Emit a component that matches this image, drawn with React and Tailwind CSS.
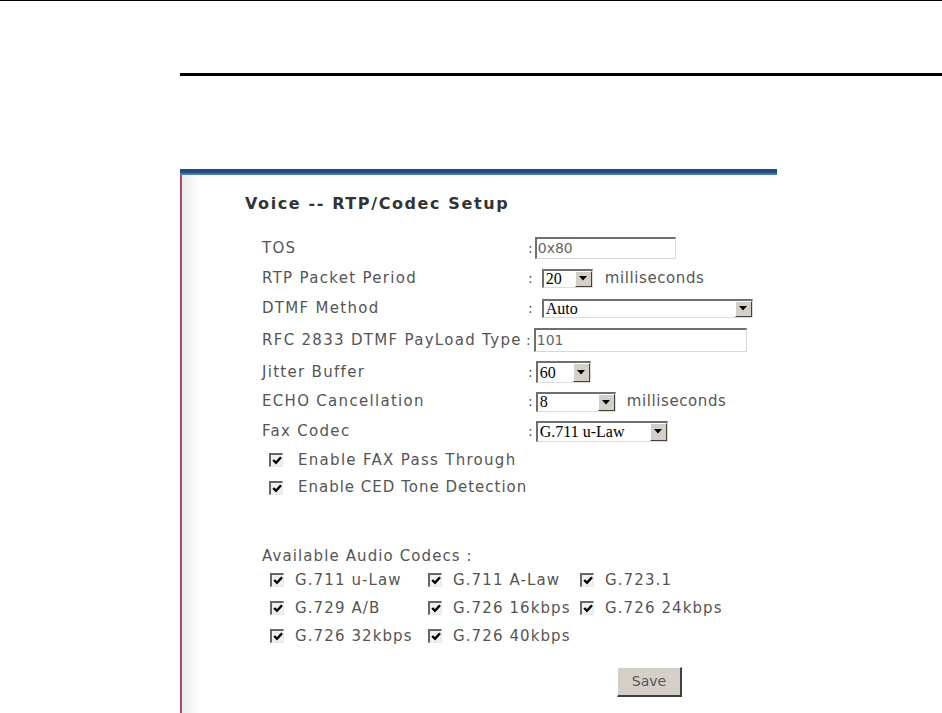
import React from "react";

const FONT = "font-['DejaVu_Sans',Verdana,sans-serif]";
const SERIF = "font-['Liberation_Serif','Times_New_Roman',serif]";

function Arrow() {
  return (
    <div className="w-[17px] shrink-0 bg-[#d4d0c8] border-t border-l border-t-white border-l-white border-b border-r border-b-[#404040] border-r-[#404040] flex items-center justify-center">
      <svg width="8" height="5" viewBox="0 0 8 5">
        <polygon points="0,0 8,0 4,4.5" fill="#000" />
      </svg>
    </div>
  );
}

function Select({ cls, text }) {
  return (
    <div
      className={`flex items-stretch bg-white border-t-2 border-l-2 border-t-[#6f6f6f] border-l-[#6f6f6f] border-b border-r border-b-[#dcdcdc] border-r-[#dcdcdc] ${cls}`}
    >
      <div className={`flex-1 ${SERIF} text-[16px] tracking-normal leading-none text-black pl-[2px] flex items-center overflow-hidden whitespace-nowrap`}>
        {text}
      </div>
      <Arrow />
    </div>
  );
}

function Input({ cls, text }) {
  return (
    <div
      className={`bg-white border-t-2 border-l-2 border-t-[#6f6f6f] border-l-[#6f6f6f] border-b border-r border-b-[#d8d8d8] border-r-[#d8d8d8] flex items-center pl-[1px] ${FONT} text-[14px] tracking-normal text-[#666] ${cls}`}
    >
      {text}
    </div>
  );
}

function Check() {
  return (
    <span className="w-[14px] h-[14px] shrink-0 bg-[#f0f0f0] border-t-2 border-l-2 border-t-[#666] border-l-[#666] border-b border-r border-b-[#e8e8e8] border-r-[#e8e8e8] flex items-center justify-center">
      <svg width="10" height="9" viewBox="0 0 10 9">
        <polyline points="1.2,4 4,6.8 9,1.2" fill="none" stroke="#000" strokeWidth="2.4" />
      </svg>
    </span>
  );
}

function Row({ label, children, cls = "h-[30px]" }) {
  return (
    <div className={`flex items-center ${cls}`}>
      <div className="w-[264px] shrink-0 whitespace-nowrap">{label}</div>
      {children}
    </div>
  );
}

function Colon({ cls = "" }) {
  return <span className={`text-[14px] tracking-normal text-[#555] ${cls}`}>:</span>;
}

function Codec({ label, cls }) {
  return (
    <div className={`flex items-center ${cls}`}>
      <Check />
      <span className="ml-[11px] whitespace-nowrap">{label}</span>
    </div>
  );
}

export default function App() {
  return (
    <div className={`w-[942px] h-[713px] bg-white overflow-hidden ${FONT}`}>
      <div className="h-px bg-black" />
      <div className="ml-[180px] mt-[72px] h-[3px] bg-black" />
      <div className="ml-[180px] mt-[93px] w-[597px] h-[6px] bg-gradient-to-b from-[#1f4f8f] via-[#1a4886] to-[#5f8cc4]" />
      <div className="ml-[180px] w-[597px] h-[600px] flex">
        <div className="w-[2px] bg-[#b2496a]" />
        <div className="w-[18px] bg-gradient-to-r from-[#ebebeb] to-white" />
        <div className="flex-1 text-[15px] tracking-[1.3px] text-[#555]">
          <div className="pl-[45px] pt-[20px] h-[39px] font-bold text-[16px] tracking-[1.6px] text-[#333] leading-[18px]">
            Voice -- RTP/Codec Setup
          </div>
          <div className="pl-[62px] mt-[19px]">
            <Row label="TOS">
              <Colon cls="ml-[2px]" />
              <Input cls="ml-[2px] w-[141px] h-[22px]" text="0x80" />
            </Row>
            <Row label="RTP Packet Period">
              <Colon cls="ml-[2px]" />
              <Select cls="ml-[9px] w-[51px] h-[19px]" text="20" />
              <span className="ml-[12px] tracking-[0.6px]">milliseconds</span>
            </Row>
            <Row label="DTMF Method">
              <Colon cls="ml-[2px]" />
              <Select cls="ml-[9px] w-[211px] h-[19px]" text="Auto" />
            </Row>
            <Row label="RFC 2833 DTMF PayLoad Type" cls="h-[34px]">
              <Colon cls="ml-[0px]" />
              <Input cls="ml-[3px] w-[213px] h-[24px]" text="101" />
            </Row>
            <Row label="Jitter Buffer" cls="h-[30px]">
              <Colon cls="ml-[2px]" />
              <Select cls="ml-[3px] w-[55px] h-[22px]" text="60" />
            </Row>
            <Row label="ECHO Cancellation" cls="h-[29px]">
              <Colon cls="ml-[2px]" />
              <Select cls="ml-[3px] w-[80px] h-[20px]" text="8" />
              <span className="ml-[11px] tracking-[0.6px]">milliseconds</span>
            </Row>
            <Row label="Fax Codec" cls="h-[30px]">
              <Colon cls="ml-[2px]" />
              <Select cls="ml-[3px] w-[132px] h-[21px]" text="G.711 u-Law" />
            </Row>
            <div className="flex items-center h-[28px] pl-[7px]">
              <Check />
              <span className="ml-[15px]">Enable FAX Pass Through</span>
            </div>
            <div className="flex items-center h-[27px] pl-[7px]">
              <Check />
              <span className="ml-[15px] tracking-[1.0px]">Enable CED Tone Detection</span>
            </div>
            <div className="mt-[45px] h-[20px] flex items-center tracking-[1.1px]">Available Audio Codecs :</div>
            <div className="pl-[8px] tracking-[1.1px]">
              <div className="flex h-[28px] items-center">
                <Codec label="G.711 u-Law" cls="w-[158px]" />
                <Codec label="G.711 A-Law" cls="w-[152px]" />
                <Codec label="G.723.1" cls="" />
              </div>
              <div className="flex h-[28px] items-center">
                <Codec label="G.729 A/B" cls="w-[158px]" />
                <Codec label="G.726 16kbps" cls="w-[152px]" />
                <Codec label="G.726 24kbps" cls="" />
              </div>
              <div className="flex h-[28px] items-center">
                <Codec label="G.726 32kbps" cls="w-[158px]" />
                <Codec label="G.726 40kbps" cls="" />
              </div>
            </div>
            <div className="mt-[17px] pl-[355px]">
              <button className="w-[65px] h-[30px] bg-[#d4d0c8] border-t border-l border-t-white border-l-white border-b-2 border-r-2 border-b-[#404040] border-r-[#404040] text-[14px] tracking-normal text-[#555] flex items-center justify-center">
                Save
              </button>
            </div>
          </div>
        </div>
      </div>
    </div>
  );
}
